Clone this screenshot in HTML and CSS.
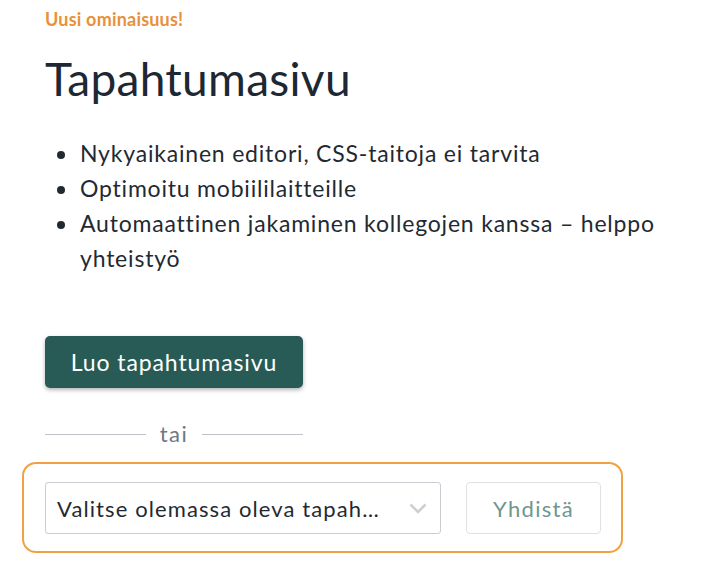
FILE: index.html
```html
<!DOCTYPE html>
<html lang="fi">
<head>
<meta charset="utf-8">
<title>Tapahtumasivu</title>
<link rel="stylesheet" href="styles.css">
</head>
<body>
<main class="page">
  <p class="badge">Uusi ominaisuus!</p>
  <h1 class="title">Tapahtumasivu</h1>
  <ul class="features">
    <li>Nykyaikainen editori, CSS-taitoja ei tarvita</li>
    <li>Optimoitu mobiililaitteille</li>
    <li>Automaattinen jakaminen kollegojen kanssa – helppo yhteistyö</li>
  </ul>
  <button class="primary" type="button">Luo tapahtumasivu</button>
  <div class="divider"><span class="divider-line"></span><span class="divider-text">tai</span><span class="divider-line"></span></div>
  <div class="connect">
    <div class="select">
      <span class="select-text">Valitse olemassa oleva tapah…</span>
      <svg class="chevron" width="18" height="11" viewBox="0 0 18 11" aria-hidden="true"><path d="M1.5 1.5 L9 9 L16.5 1.5" fill="none" stroke="#cfcfcf" stroke-width="2.6"/></svg>
    </div>
    <button class="secondary" type="button">Yhdistä</button>
  </div>
</main>
</body>
</html>
```
FILE: styles.css
```css
* { box-sizing: border-box; }
html, body { margin: 0; padding: 0; background: #ffffff; }
body { font-family: Lato, "Noto Sans", sans-serif; color: #1f2a33; }
.page { width: 704px; padding: 8px 45px 0 45px; }
.badge {
  margin: 0;
  font-size: 18px;
  line-height: 22px;
  font-weight: 700;
  letter-spacing: 0.2px;
  color: #e8913a;
}
.title {
  margin: 21px 0 0 0;
  font-size: 46px;
  line-height: 56px;
  font-weight: 400;
  color: #1d2834;
  letter-spacing: 0.3px;
}
.features {
  margin: 29px 0 0 0;
  padding: 0 0 0 34px;
  font-size: 23px;
  line-height: 35px;
  letter-spacing: 0.8px;
  color: #1f2a33;
}
.features li { padding-left: 1px; }
.primary {
  margin-top: 60px;
  display: block;
  width: 258px;
  height: 52px;
  border: none;
  border-radius: 5px;
  background: #285b56;
  color: #ffffff;
  font-family: inherit;
  font-size: 23px;
  letter-spacing: 0.9px;
  box-shadow: 0 2px 4px rgba(0,0,0,0.3);
}
.divider {
  margin-top: 34px;
  width: 258px;
  height: 24px;
  display: flex;
  align-items: center;
  gap: 14px;
}
.divider-line { flex: 1; height: 1px; background: #bfc3c7; }
.divider-text { font-size: 22px; line-height: 24px; letter-spacing: 1.5px; color: #6f7780; }
.connect {
  margin: 16px 0 0 -23px;
  width: 601px;
  border: 2px solid #f0a143;
  border-radius: 14px;
  padding: 18px 20px 17px 21px;
  display: flex;
  gap: 25px;
}
.select {
  width: 396px;
  height: 52px;
  border: 1px solid #c9cdd1;
  border-radius: 3px;
  display: flex;
  align-items: center;
  justify-content: space-between;
  padding: 0 13px 0 11px;
}
.select-text { font-size: 22px; letter-spacing: 1.1px; color: #1f2a33; white-space: nowrap; }
.chevron { display: block; }
.secondary {
  width: 135px;
  height: 52px;
  border: 1px solid #dfe2e4;
  border-radius: 4px;
  background: #ffffff;
  color: #6e9691;
  font-family: inherit;
  font-size: 22px;
  letter-spacing: 1.3px;
}
```
